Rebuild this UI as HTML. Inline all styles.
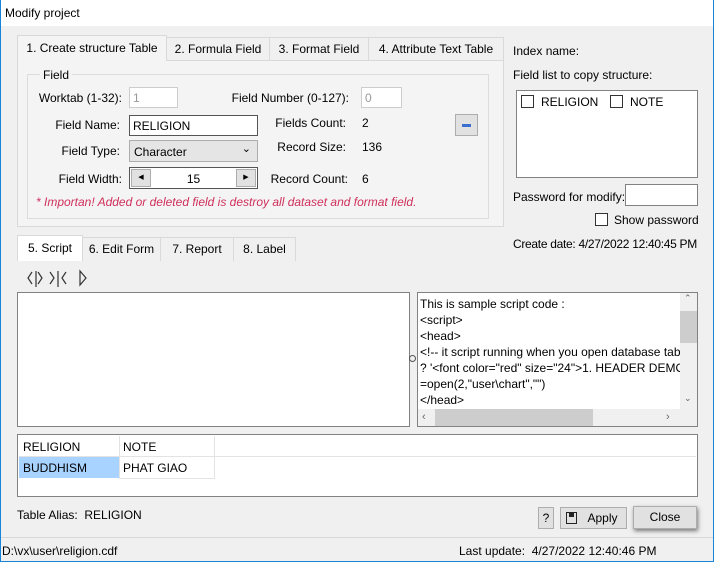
<!DOCTYPE html>
<html><head><style>
*{box-sizing:border-box;margin:0;padding:0}
body{width:714px;height:562px;background:#f0f0f0;font-family:"Liberation Sans",sans-serif;font-size:12px;color:#000;position:relative;overflow:hidden}
.a{position:absolute;white-space:nowrap}
.r{text-align:right}
.box{position:absolute;background:#fff;border:1px solid #7a7a7a}
.tab{position:absolute;border:1px solid #d9d9d9;border-bottom:none;background:#f0f0f0;text-align:center;line-height:22px}
.sel{background:#fafafa;line-height:24px}
.cb{position:absolute;width:13px;height:13px;border:1px solid #333;background:#fff}
.btn{position:absolute;background:#e1e1e1;border:1px solid #adadad;text-align:center}
</style></head><body>
<div class="a" style="left:0;top:0;width:714px;height:26px;background:#fff"></div>
<div class="a" style="left:0;top:0;width:1px;height:562px;background:#1883d7"></div>
<div class="a" style="left:713px;top:0;width:1px;height:562px;background:#1883d7"></div>
<div class="a" style="left:0;top:561px;width:714px;height:1px;background:#1883d7"></div>
<div class="a" style="left:5px;top:6px">Modify project</div>

<div class="a" style="left:17px;top:60px;width:487px;height:167px;border:1px solid #d9d9d9;background:#f4f4f4"></div>
<div class="tab" style="left:166px;top:37px;width:104px;height:23px">2. Formula Field</div>
<div class="tab" style="left:269px;top:37px;width:100px;height:23px">3. Format Field</div>
<div class="tab" style="left:368px;top:37px;width:136px;height:23px">4. Attribute Text Table</div>
<div class="tab sel" style="left:17px;top:35px;width:150px;height:26px;background:#f4f4f4">1. Create structure Table</div>

<div class="a" style="left:27px;top:74px;width:462px;height:145px;border:1px solid #dcdcdc"></div>
<div class="a" style="left:40px;top:68px;background:#f4f4f4;padding:0 3px">Field</div>

<div class="a r" style="left:20px;width:102px;top:91px">Worktab (1-32):</div>
<div class="box" style="left:129px;top:87px;width:49px;height:21px;border-color:#ccc;color:#999;padding:3px 3px">1</div>
<div class="a r" style="left:200px;width:149px;top:91px">Field Number (0-127):</div>
<div class="box" style="left:361px;top:87px;width:41px;height:21px;border-color:#ccc;color:#999;padding:3px 3px">0</div>

<div class="a r" style="left:20px;width:100px;top:118px">Field Name:</div>
<div class="box" style="left:129px;top:115px;width:129px;height:21px;border-color:#555;padding:3px 3px">RELIGION</div>
<div class="a r" style="left:240px;width:106px;top:116px">Fields Count:</div>
<div class="a" style="left:362px;top:116px">2</div>
<div class="btn" style="left:455px;top:114px;width:23px;height:22px"><div class="a" style="left:6px;top:9px;width:9px;height:3px;background:#3a6fd0"></div></div>

<div class="a r" style="left:20px;width:100px;top:144px">Field Type:</div>
<div class="btn" style="left:129px;top:140px;width:129px;height:22px;text-align:left;padding:4px 4px;background:#e5e5e5">Character<span class="a" style="right:6px;top:1px;font-size:11px">&#8964;</span></div>
<div class="a r" style="left:240px;width:106px;top:140px">Record Size:</div>
<div class="a" style="left:362px;top:140px">136</div>

<div class="a r" style="left:20px;width:102px;top:172px">Field Width:</div>
<div class="box" style="left:129px;top:167px;width:129px;height:22px;border-color:#555;text-align:center;padding-top:4px">15</div>
<div class="btn" style="left:131px;top:169px;width:20px;height:18px;font-size:7px;line-height:16px">&#9664;</div>
<div class="btn" style="left:236px;top:169px;width:20px;height:18px;font-size:7px;line-height:16px">&#9654;</div>
<div class="a r" style="left:240px;width:108px;top:172px">Record Count:</div>
<div class="a" style="left:362px;top:172px">6</div>
<div class="a" style="left:36px;top:195px;color:#d0305c;font-style:italic">* Importan! Added or deleted field is destroy all dataset and format field.</div>

<div class="a" style="left:513px;top:44px">Index name:</div>
<div class="a" style="left:513px;top:68px">Field list to copy structure:</div>
<div class="box" style="left:516px;top:90px;width:182px;height:88px;border-color:#828282"></div>
<div class="cb" style="left:521px;top:95px"></div><div class="a" style="left:541px;top:95px">RELIGION</div>
<div class="cb" style="left:610px;top:95px"></div><div class="a" style="left:630px;top:95px">NOTE</div>
<div class="a" style="left:513px;top:190px">Password for modify:</div>
<div class="box" style="left:625px;top:184px;width:73px;height:22px;border-color:#828282"></div>
<div class="cb" style="left:595px;top:213px"></div><div class="a" style="left:614px;top:213px">Show password</div>
<div class="a" style="left:513px;top:237px;letter-spacing:-0.3px">Create date: 4/27/2022 12:40:45 PM</div>

<div class="tab" style="left:82px;top:237px;width:79px;height:24px">6. Edit Form</div>
<div class="tab" style="left:160px;top:237px;width:74px;height:24px">7. Report</div>
<div class="tab" style="left:233px;top:237px;width:63px;height:24px">8. Label</div>
<div class="tab sel" style="left:17px;top:235px;width:66px;height:26px;background:#fff">5. Script</div>

<svg class="a" style="left:26px;top:268px" width="70" height="22" fill="none" stroke="#333" stroke-width="1.2">
<path d="M6 4 L2 10 L6 16 M10 3 V19 M12 4 L16 10 L12 16"/>
<path d="M24 4 L28 10 L24 16 M32 3 V19 M40 4 L36 10 L40 16"/>
<path d="M54 3 L60 10 L54 17 Z"/>
</svg>

<div class="box" style="left:17px;top:292px;width:393px;height:135px;border-color:#828282"></div>
<div class="a" style="left:409px;top:355px;width:7px;height:7px;border:1px solid #555;border-radius:50%"></div>
<div class="box" style="left:417px;top:292px;width:281px;height:135px;border-color:#828282;overflow:hidden">
<div style="position:absolute;left:2px;top:3px;line-height:16px;white-space:pre;font-size:12px">This is sample script code :
&lt;script&gt;
&lt;head&gt;
&lt;!-- it script running when you open database tab
? '&lt;font color="red" size="24"&gt;1. HEADER DEMO
=open(2,"user\chart","")
&lt;/head&gt;</div>
<div class="a" style="left:262px;top:0;width:17px;height:116px;background:#f0f0f0"></div>
<div class="a" style="left:262px;top:18px;width:17px;height:32px;background:#cdcdcd"></div>
<div class="a" style="left:0;top:116px;width:279px;height:17px;background:#f0f0f0"></div>
<div class="a" style="left:17px;top:116px;width:158px;height:17px;background:#cdcdcd"></div>
<div class="a" style="left:266px;top:0;font-size:9px;color:#666">&#8963;</div>
<div class="a" style="left:266px;top:100px;font-size:9px;color:#666">&#8964;</div>
<div class="a" style="left:4px;top:118px;font-size:11px;color:#666">&#8249;</div>
<div class="a" style="left:248px;top:118px;font-size:11px;color:#666">&#8250;</div>
</div>

<div class="box" style="left:17px;top:434px;width:681px;height:63px;border-color:#828282"></div>
<div class="a" style="left:19px;top:456px;width:677px;height:1px;background:#e3e3e3"></div>
<div class="a" style="left:119px;top:436px;width:1px;height:42px;background:#e3e3e3"></div>
<div class="a" style="left:214px;top:436px;width:1px;height:42px;background:#e3e3e3"></div>
<div class="a" style="left:119px;top:478px;width:96px;height:1px;background:#e3e3e3"></div>
<div class="a" style="left:23px;top:440px">RELIGION</div>
<div class="a" style="left:123px;top:440px">NOTE</div>
<div class="a" style="left:19px;top:457px;width:100px;height:21px;background:#a8d2ff"></div>
<div class="a" style="left:23px;top:461px">BUDDHISM</div>
<div class="a" style="left:123px;top:461px">PHAT GIAO</div>

<div class="a" style="left:17px;top:508px">Table Alias:&nbsp; RELIGION</div>
<div class="btn" style="left:538px;top:507px;width:16px;height:22px;line-height:20px">?</div>
<div class="btn" style="left:560px;top:507px;width:67px;height:22px;line-height:20px;padding-left:18px">Apply
<div class="a" style="left:5px;top:4px;width:11px;height:12px;border:1.5px solid #222"><div class="a" style="left:2px;top:0;width:5px;height:4px;background:#222"></div></div></div>
<div class="btn" style="left:633px;top:506px;width:64px;height:23px;line-height:21px;box-shadow:1px 2px 4px #777">Close</div>

<div class="a" style="left:1px;top:537px;width:712px;height:1px;background:#d8d8d8"></div>
<div class="a" style="left:2px;top:544px">D:\vx\user\religion.cdf</div>
<div class="a" style="left:459px;top:544px">Last update:&nbsp; 4/27/2022 12:40:46 PM</div>
</body></html>
